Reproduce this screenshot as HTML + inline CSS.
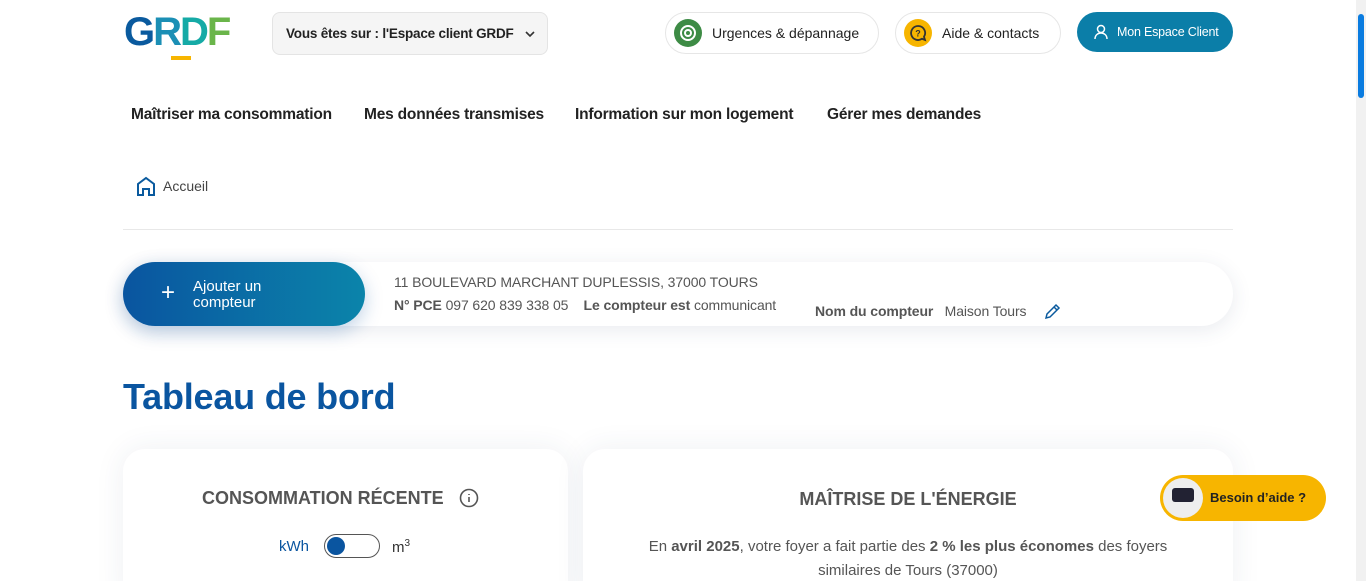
<!DOCTYPE html>
<html><head><meta charset="utf-8"><style>
*{box-sizing:border-box;margin:0;padding:0}
html,body{width:1366px;height:581px;overflow:hidden}
body{background:#fff;font-family:"Liberation Sans",sans-serif;color:#333;position:relative}
.a{position:absolute}
.pill{position:absolute;height:42px;border:1px solid #e6e6e6;border-radius:21px;background:#fff;display:flex;align-items:center;font-size:14px;color:#222;white-space:nowrap}
.ic{width:28px;height:28px;border-radius:50%;margin:0 10px 0 8px;display:flex;align-items:center;justify-content:center}
.nav{position:absolute;top:106px;font-size:15.5px;font-weight:bold;color:#222;letter-spacing:-.2px;white-space:nowrap}
.card{position:absolute;background:#fff;border-radius:22px;box-shadow:0 0 30px rgba(40,60,100,.08)}
</style></head><body>
<div class="a" style="left:124px;top:10px;font-size:40px;font-weight:900;letter-spacing:-2px;line-height:44px">
<span style="color:#0a5a9e">G</span><span style="color:#1b8fb5">R</span><span style="color:#15aaa6">D</span><span style="color:#6ab54a">F</span></div>
<div class="a" style="left:171px;top:56px;width:20px;height:4px;background:#f7b500"></div>
<div class="a" style="left:272px;top:12px;width:276px;height:43px;background:#f5f5f5;border:1px solid #e4e4e4;border-radius:8px;font-size:13.5px;font-weight:bold;color:#222;line-height:41px;padding-left:13px;white-space:nowrap;letter-spacing:-.2px">Vous êtes sur : l'Espace client GRDF</div>
<svg class="a" style="left:525px;top:30px" width="10" height="8" viewBox="0 0 10 8" fill="none" stroke="#333" stroke-width="1.6"><path d="M1 2l4 4 4-4"/></svg>
<div class="pill" style="left:665px;top:12px;width:214px"><div class="ic" style="background:#3d8b45"><svg width="18" height="18" viewBox="0 0 18 18" fill="none" stroke="#fff" stroke-width="2"><circle cx="9" cy="9" r="7"/><circle cx="9" cy="9" r="3"/></svg></div>Urgences &amp; dépannage</div>
<div class="pill" style="left:895px;top:12px;width:166px"><div class="ic" style="background:#f7b500"><svg width="18" height="18" viewBox="0 0 18 18" fill="none" stroke="#333" stroke-width="1.8"><path d="M9 2a7 7 0 1 0 4 12.8L16 16l-1-3.2A7 7 0 0 0 9 2z"/><text x="6.3" y="12.5" font-size="9" font-family="Liberation Sans" fill="#333" stroke="none" font-weight="bold">?</text></svg></div>Aide &amp; contacts</div>
<div class="a" style="left:1077px;top:12px;width:156px;height:40px;border-radius:20px;background:#0b7ea8;color:#fff;font-size:12.5px;display:flex;align-items:center;padding-left:16px;white-space:nowrap;letter-spacing:-.2px"><svg width="16" height="16" viewBox="0 0 16 16" fill="none" stroke="#fff" stroke-width="1.5" style="margin-right:8px"><circle cx="8" cy="5" r="3.5"/><path d="M2 15c0-4 3-6 6-6s6 2 6 6"/></svg>Mon Espace Client</div>
<div class="nav" style="left:131px">Maîtriser ma consommation</div>
<div class="nav" style="left:364px">Mes données transmises</div>
<div class="nav" style="left:575px">Information sur mon logement</div>
<div class="nav" style="left:827px">Gérer mes demandes</div>
<svg class="a" style="left:135px;top:175px" width="22" height="22" viewBox="0 0 22 22" fill="none" stroke="#0a5a9e" stroke-width="2"><path d="M3 20V9l8-6 8 6v11h-5v-6H8v6z"/></svg>
<div class="a" style="left:163px;top:178px;font-size:14px;color:#444">Accueil</div>
<div class="a" style="left:123px;top:229px;width:1110px;height:1px;background:#e8e8e8"></div>
<div class="a" style="left:123px;top:262px;width:1110px;height:64px;border-radius:32px;background:#fff;box-shadow:0 4px 20px rgba(40,60,100,.1)"></div>
<div class="a" style="left:123px;top:262px;width:242px;height:64px;border-radius:32px;background:linear-gradient(90deg,#0a55a0,#0b84aa);box-shadow:0 6px 18px rgba(10,80,160,.25);color:#fff;font-size:15px;line-height:16px;padding:17px 0 0 70px">Ajouter un<br>compteur<span class="a" style="left:38px;top:19px;font-size:24px;font-weight:300;line-height:24px">+</span></div>
<div class="a" style="left:394px;top:274px;font-size:14px;color:#555;letter-spacing:-.1px">11 BOULEVARD MARCHANT DUPLESSIS, 37000 TOURS</div>
<div class="a" style="left:394px;top:297px;font-size:14px;color:#555;letter-spacing:-.1px;white-space:nowrap"><b>N° PCE</b> 097 620 839 338 05 &nbsp;&nbsp; <b>Le compteur est</b> communicant</div>
<div class="a" style="left:815px;top:303px;font-size:14px;color:#555;letter-spacing:-.1px"><b>Nom du compteur</b> &nbsp;&nbsp;Maison Tours</div>
<svg class="a" style="left:1044px;top:302px" width="18" height="18" viewBox="0 0 18 18" fill="none" stroke="#0a5a9e" stroke-width="1.5"><path d="M2 16l1-4 9-9 3 3-9 9zM10 5l3 3"/></svg>
<div class="a" style="left:123px;top:376px;font-size:36px;font-weight:bold;color:#0a55a0;letter-spacing:-.2px">Tableau de bord</div>
<div class="card" style="left:123px;top:449px;width:445px;height:160px"></div>
<div class="card" style="left:583px;top:449px;width:650px;height:160px"></div>
<div class="a" style="left:202px;top:488px;font-size:18px;font-weight:bold;color:#555;letter-spacing:0">CONSOMMATION RÉCENTE</div>
<svg class="a" style="left:459px;top:488px" width="20" height="20" viewBox="0 0 20 20" fill="none" stroke="#555" stroke-width="1.6"><circle cx="10" cy="10" r="8.5"/><path d="M10 9v5M10 6v1"/></svg>
<div class="a" style="left:279px;top:538px;font-size:15px;color:#0a55a0">kWh</div>
<div class="a" style="left:324px;top:534px;width:56px;height:24px;border:1px solid #555;border-radius:12px"><div style="position:absolute;left:2px;top:2px;width:18px;height:18px;border-radius:50%;background:#0a55a0"></div></div>
<div class="a" style="left:392px;top:538px;font-size:15px;color:#333">m<sup style="font-size:10px">3</sup></div>
<div class="a" style="left:583px;top:489px;width:650px;text-align:center;font-size:18px;font-weight:bold;color:#555">MAÎTRISE DE L'ÉNERGIE</div>
<div class="a" style="left:583px;top:535px;width:650px;text-align:center;font-size:15px;color:#555;line-height:24px">En <b>avril 2025</b>, votre foyer a fait partie des <b>2 % les plus économes</b> des foyers<br>similaires de Tours (37000)</div>
<div class="a" style="left:1160px;top:475px;width:166px;height:46px;border-radius:23px;background:#f7b500;font-size:13px;font-weight:bold;color:#222;line-height:46px;padding-left:50px">Besoin d’aide ?
<div class="a" style="left:3px;top:3px;width:40px;height:40px;border-radius:50%;background:#eee"><div class="a" style="left:9px;top:10px;width:22px;height:14px;background:#223;border-radius:3px"></div></div></div>
<div class="a" style="left:1356px;top:0;width:10px;height:581px;background:#f1f1f1"></div>
<div class="a" style="left:1358px;top:14px;width:6px;height:84px;background:#0a7ce0;border-radius:3px"></div>
</body></html>
